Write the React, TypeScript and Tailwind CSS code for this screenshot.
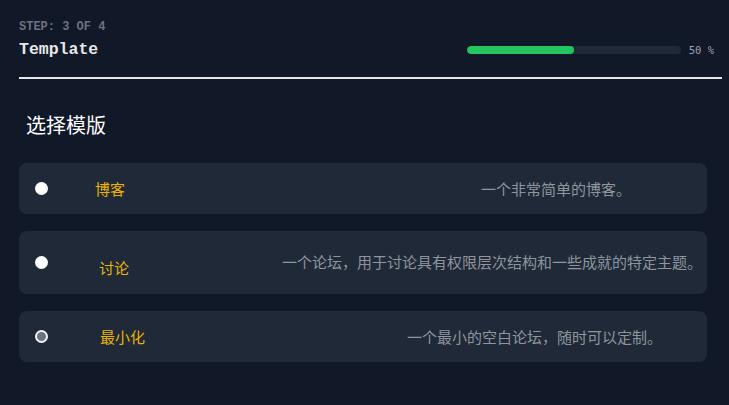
import React from "react";

const cjk = '"Noto Sans CJK SC", "Noto Sans", sans-serif';
const mono = '"Liberation Mono", "DejaVu Sans Mono", monospace';

type Item = {
  title: string;
  desc: string;
  checked: boolean;
  cardH: string;
  titleCls: string;
  descCls: string;
};

const items: Item[] = [
  {
    title: "博客",
    desc: "一个非常简单的博客。",
    checked: false,
    cardH: "h-[51px]",
    titleCls: "ml-[47px]",
    descCls: "ml-[356px]",
  },
  {
    title: "讨论",
    desc: "一个论坛，用于讨论具有权限层次结构和一些成就的特定主题。",
    checked: false,
    cardH: "h-[63px]",
    titleCls: "ml-[51px] pt-[10px]",
    descCls: "ml-[153px] pb-[2px]",
  },
  {
    title: "最小化",
    desc: "一个最小的空白论坛，随时可以定制。",
    checked: true,
    cardH: "h-[51px]",
    titleCls: "ml-[52px]",
    descCls: "ml-[262px]",
  },
];

function Radio({ checked }: { checked: boolean }) {
  if (checked) {
    return (
      <div className="w-[13px] h-[13px] shrink-0 rounded-full border-2 border-[#f3f4f6] bg-[#6b7280]" />
    );
  }
  return <div className="w-[13px] h-[13px] shrink-0 rounded-full bg-white" />;
}

export default function App() {
  return (
    <div className="min-h-screen w-full bg-[#111827] pl-[19px] pt-[19px] pb-[40px]" style={{ fontFamily: cjk }}>
      <div className="mr-[7px]">
        <div
          className="text-[12px] leading-[16px] font-bold text-[#6b7280]"
          style={{ fontFamily: mono }}
        >
          STEP: 3 OF 4
        </div>
        <div className="flex items-center justify-between pr-[8px]">
          <div
            className="text-[16.5px] leading-[30px] font-bold text-[#e5e7eb]"
            style={{ fontFamily: mono }}
          >
            Template
          </div>
          <div className="flex items-center gap-[8px]">
            <div className="w-[214px] h-[8px] rounded-full bg-[#1f2937] overflow-hidden">
              <div className="w-1/2 h-full rounded-full bg-[#22c55e]" />
            </div>
            <span
              className="text-[10.5px] leading-[14px] text-[#9ca3af]"
              style={{ fontFamily: '"DejaVu Sans Mono", monospace' }}
            >
              50 %
            </span>
          </div>
        </div>
        <div className="mt-[12px] h-[2px] bg-[#e5e7eb]" />
      </div>

      <div className="ml-[7px] mt-[32px] text-[20px] leading-[28px] text-white">选择模版</div>

      <div className="mt-[24px] mr-[22px] flex flex-col gap-[17px]">
        {items.map((it) => (
          <div
            key={it.title}
            className={`flex items-center rounded-lg bg-[#1f2937] pl-[16px] ${it.cardH}`}
          >
            <Radio checked={it.checked} />
            <span className={`text-[15px] leading-[20px] text-[#eab308] whitespace-nowrap ${it.titleCls}`}>
              {it.title}
            </span>
            <span className={`text-[15px] leading-[20px] text-[#8f959e] whitespace-nowrap ${it.descCls}`}>
              {it.desc}
            </span>
          </div>
        ))}
      </div>
    </div>
  );
}
